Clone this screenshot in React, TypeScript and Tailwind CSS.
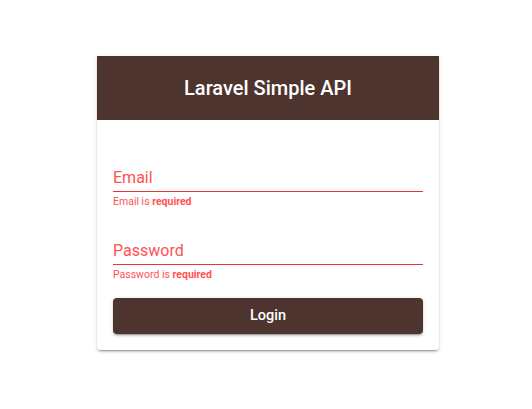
import React from "react";

const App: React.FC = () => {
  return (
    <div className="min-h-screen bg-white pt-[56px] font-['Roboto',sans-serif]">
      <div className="ml-[97px] w-[342px] rounded-b bg-white shadow-[0_3px_1px_-2px_rgba(0,0,0,0.2),0_2px_2px_0_rgba(0,0,0,0.14),0_1px_5px_0_rgba(0,0,0,0.12)]">
        {/* Header */}
        <div className="flex h-16 items-center justify-center bg-[#4e342e]">
          <h1 className="text-[20px] font-medium text-white">Laravel Simple API</h1>
        </div>

        {/* Form */}
        <div className="px-4 pt-12 pb-4">
          <div>
            <div className="border-b border-[#e53935] pb-[3px]">
              <label className="block text-base leading-5 text-[#ff5252]">Email</label>
            </div>
            <p className="mt-[4px] text-[10.5px] leading-3 text-[#ff5252]">
              Email is <b className="font-bold">required</b>
            </p>
          </div>

          <div className="mt-[33px]">
            <div className="border-b border-[#e53935] pb-[3px]">
              <label className="block text-base leading-5 text-[#ff5252]">Password</label>
            </div>
            <p className="mt-[4px] text-[10.5px] leading-3 text-[#ff5252]">
              Password is <b className="font-bold">required</b>
            </p>
          </div>

          <button className="mt-[17px] flex h-9 w-full items-center justify-center rounded bg-[#4e342e] text-[14.5px] font-medium text-white shadow-[0_3px_1px_-2px_rgba(0,0,0,0.2),0_2px_2px_0_rgba(0,0,0,0.14),0_1px_5px_0_rgba(0,0,0,0.12)]">
            Login
          </button>
        </div>
      </div>
    </div>
  );
};

export default App;
